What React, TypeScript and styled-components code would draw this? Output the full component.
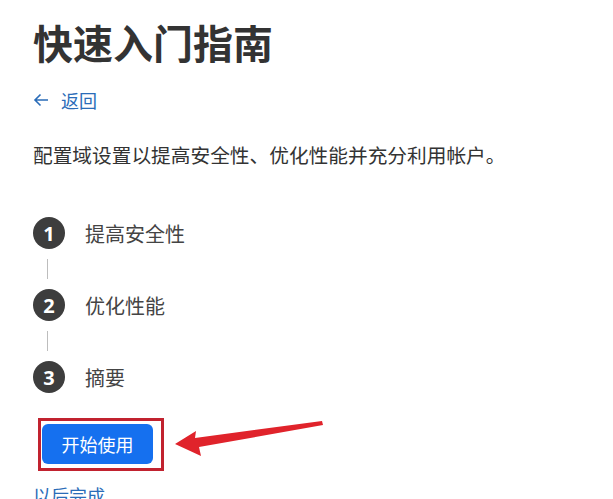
import React from 'react'
import styled, { createGlobalStyle } from 'styled-components'

const GlobalStyle = createGlobalStyle`
  html, body {
    margin: 0;
    padding: 0;
    background: #fff;
    overflow: hidden;
  }
  body {
    font-family: "Noto Sans CJK SC", "Noto Sans", sans-serif;
  }
`

const Page = styled.div`
  display: flex;
  flex-direction: column;
  align-items: flex-start;
  padding: 18px 0 0 33px;
  color: #333;
`

const Title = styled.h1`
  margin: 0;
  font-size: 40px;
  line-height: 48px;
  font-weight: 700;
  color: #333;
`

const BackLink = styled.a`
  display: flex;
  align-items: center;
  gap: 12px;
  margin-top: 22px;
  font-size: 18px;
  line-height: 24px;
  color: #2a6cb8;
  text-decoration: none;
`

const Desc = styled.p`
  margin: 29px 0 0;
  font-size: 19.7px;
  line-height: 28px;
  color: #333;
`

const Steps = styled.ol`
  list-style: none;
  margin: 48px 0 0;
  padding: 0;
  display: flex;
  flex-direction: column;
`

const Step = styled.li`
  display: flex;
  align-items: center;
  gap: 20px;
  height: 32px;
`

const Circle = styled.span`
  width: 32px;
  height: 32px;
  border-radius: 50%;
  background: #3d3d3d;
  color: #fff;
  font-family: "Noto Sans", sans-serif;
  font-weight: 700;
  font-size: 20px;
  display: flex;
  align-items: center;
  justify-content: center;
`

const Label = styled.span`
  font-size: 20px;
  color: #444;
`

const Connector = styled.span`
  display: block;
  width: 1px;
  height: 20px;
  margin: 10px 0 10px 14px;
  background: #bdbdbd;
`

const ActionRow = styled.div`
  position: relative;
  margin: 25px 0 0 5px;
`

const Highlight = styled.div`
  display: inline-flex;
  padding: 3px 8px 4px 1px;
  border: 3px solid #c1222f;
`

const PrimaryButton = styled.button`
  width: 111px;
  height: 40px;
  border: none;
  border-radius: 6px;
  background: #1570ef;
  color: #fff;
  font-family: "Noto Sans CJK SC", sans-serif;
  font-size: 18px;
  cursor: pointer;
`

const Pointer = styled.svg`
  position: absolute;
  left: 132px;
  top: -3px;
`

const LaterLink = styled.a`
  margin-top: 12px;
  font-size: 18px;
  line-height: 24px;
  color: #2a6cb8;
  text-decoration: none;
`

const steps = ['提高安全性', '优化性能', '摘要']

export default function App() {
  return (
    <>
      <GlobalStyle />
      <Page>
        <Title>快速入门指南</Title>
        <BackLink href="#">
          <svg width="16" height="14" viewBox="0 0 16 14" fill="none" stroke="#2a6cb8" strokeWidth="1.6">
            <path d="M15 7H2M7.5 1.5L2 7l5.5 5.5" />
          </svg>
          返回
        </BackLink>
        <Desc>配置域设置以提高安全性、优化性能并充分利用帐户。</Desc>
        <Steps>
          {steps.map((s, i) => (
            <React.Fragment key={s}>
              {i > 0 && <Connector />}
              <Step>
                <Circle>{i + 1}</Circle>
                <Label>{s}</Label>
              </Step>
            </React.Fragment>
          ))}
        </Steps>
        <ActionRow>
          <Highlight>
            <PrimaryButton>开始使用</PrimaryButton>
          </Highlight>
          <Pointer width="160" height="45" viewBox="170 415 160 45">
            <polygon
              fill="#e0232b"
              points="175,444 196,431 195,438 322,421 323,425 199,447 201,456"
            />
          </Pointer>
        </ActionRow>
        <LaterLink href="#">以后完成</LaterLink>
      </Page>
    </>
  )
}
